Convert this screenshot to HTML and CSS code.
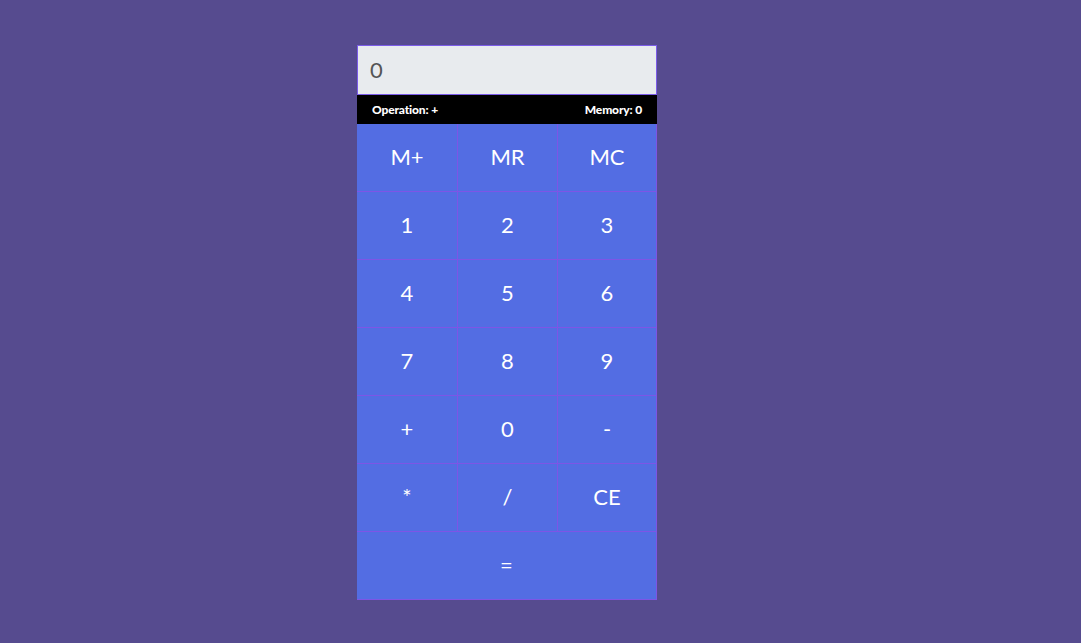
FILE: index.html
```html
<!DOCTYPE html>
<html>
<head>
<meta charset="utf-8">
<link rel="stylesheet" href="styles.css">
</head>
<body>
<div class="calc">
  <div class="display">0</div>
  <div class="status">
    <span>Operation: +</span>
    <span>Memory: 0</span>
  </div>
  <div class="keys">
    <div class="key">M+</div>
    <div class="key">MR</div>
    <div class="key">MC</div>
    <div class="key">1</div>
    <div class="key">2</div>
    <div class="key">3</div>
    <div class="key">4</div>
    <div class="key">5</div>
    <div class="key">6</div>
    <div class="key">7</div>
    <div class="key">8</div>
    <div class="key">9</div>
    <div class="key">+</div>
    <div class="key">0</div>
    <div class="key">-</div>
    <div class="key">*</div>
    <div class="key">/</div>
    <div class="key">CE</div>
    <div class="key wide">=</div>
  </div>
</div>
</body>
</html>
```

FILE: styles.css
```css
html, body {
  margin: 0;
  padding: 0;
  background: #564b8f;
  height: 100%;
  font-family: Lato, "Liberation Sans", sans-serif;
}
body {
  padding-top: 45px;
  padding-left: 357px;
  box-sizing: border-box;
}
.calc {
  width: 300px;
}
.display {
  box-sizing: border-box;
  height: 50px;
  background: #e8ebee;
  border: 1px solid #7b5ce8;
  color: #555;
  font-size: 22px;
  line-height: 48px;
  padding-left: 12px;
}
.status {
  height: 29px;
  background: #000;
  color: #fff;
  font-size: 12px;
  font-weight: 900;
  display: flex;
  justify-content: space-between;
  align-items: center;
  padding: 0 15px 0 15px;
  letter-spacing: -0.15px;
}
.keys {
  display: grid;
  grid-template-columns: 100px 99px 98px;
  grid-auto-rows: 67px;
  gap: 1px;
  padding: 0 1px 1px 0;
  background: #7d55e6;
}
.key {
  background: #536de3;
  color: #fff;
  font-size: 22px;
  display: flex;
  align-items: center;
  justify-content: center;
  padding-bottom: 2px;
}
.wide {
  grid-column: span 3;
}
```
